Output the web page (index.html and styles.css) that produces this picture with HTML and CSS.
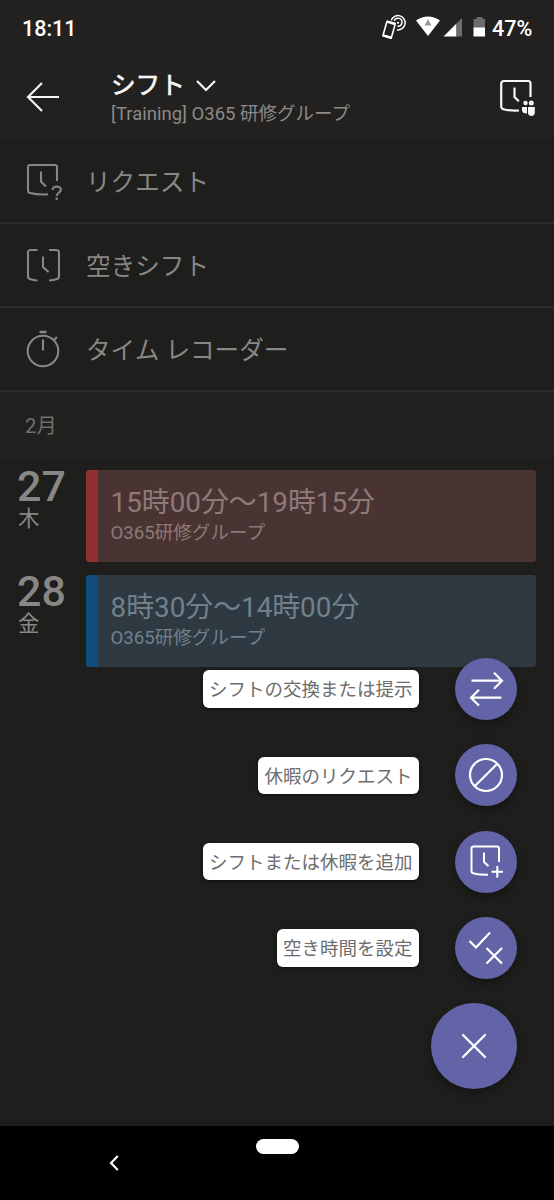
FILE: index.html
```html
<!DOCTYPE html>
<html lang="ja">
<head>
<meta charset="utf-8">
<title>シフト</title>
<link rel="stylesheet" href="styles.css">
</head>
<body>
<div class="screen">
  <header class="top">
    <div class="status">
      <span class="clock">18:11</span>
      <svg class="status-icons" width="118" height="26" viewBox="0 0 118 26">
        <g fill="none" stroke="#fff" stroke-width="1.6">
          <path d="M6 7.2 14.3 9.6 10.2 24.2 1.900 21.800Z" stroke-linejoin="round"/>
          <path d="M2.100 21.400 10.200 23.700M6 7.700 14 10" stroke-width="2.400"/>
          <path d="M10.200 6.200A7.200 7.200 0 1 1 15.900 15.900M13.200 6.800A4 4 0 1 1 16.400 12.200" stroke-width="1.500"/>
          <circle cx="17" cy="8.800" r="1.100" fill="#fff" stroke="none"/>
        </g>
        <path d="M35 6.500Q47 -1.500 59 6.500L47 22Z" fill="#fff"/>
        <path d="M47 5 50.400 11.500H43.600Z" fill="#999"/>
        <path d="M62.500 22.500 75.500 9.500V22.500Z" fill="#fff"/>
        <path d="M75.500 9.500 81 4V22.500H75.500Z" fill="#6d6c6b"/>
        <path d="M95.500 3H101.500V5H104V14H92.500V5H95.500Z" fill="#6d6c6b"/>
        <path d="M92.500 13.500H104V22.500H92.500Z" fill="#fff"/>
      </svg>
      <span class="battery">47%</span>
    </div>
    <div class="appbar">
      <svg class="back" width="34" height="32" viewBox="0 0 34 32"><path d="M33 16H2M16 2 2 16 16 30" fill="none" stroke="#f7f6f5" stroke-width="2.200"/></svg>
      <div class="titles">
        <div class="title">シフト<svg width="20" height="12" viewBox="0 0 20 12"><path d="M1 1 10 10 19 1" fill="none" stroke="#f7f6f5" stroke-width="2.200"/></svg></div>
        <div class="subtitle">[Training] O365 研修グループ</div>
      </div>
      <svg class="team" width="38" height="38" viewBox="0 0 38 38">
        <path d="M31.500 18V4.500Q31.500 2 29 2H5Q2.200 2 2.200 5V27.500Q2.200 29.500 4.500 30.200Q11 32 20 31.500M15.500 8.500V18L19.800 22.300" fill="none" stroke="#f7f6f5" stroke-width="2.200"/>
        <g fill="#f7f6f5"><circle cx="26.500" cy="24" r="2.200"/><circle cx="32.300" cy="24" r="2.500"/><path d="M23 28H28V34.500Q23 34.500 23 31Z"/><path d="M29 28H35.800V33.500A3.400 3.400 0 0 1 29 33.500Z"/></g>
      </svg>
    </div>
  </header>

  <nav class="menu">
    <div class="item">
      <svg width="38" height="38" viewBox="0 0 38 38"><g fill="none" stroke="#888785" stroke-width="2.100"><path d="M31 19V5Q31 3 29 3H4Q2 3 2 5V28.500Q2 30.500 4 31Q12 33 22 32.300M15 9.500V19.500L20 24.500"/><path d="M26.500 28Q27 24.500 31 24.500Q34.800 24.800 34.800 28Q34.500 30 32.500 31Q31 32 30.700 34"/></g><circle cx="30.700" cy="36.700" r="1.300" fill="#888785"/></svg>
      <span>リクエスト</span>
    </div>
    <div class="item">
      <svg width="38" height="38" viewBox="0 0 38 38"><path d="M11.500 4H4.500Q2 4 2 6.500V30Q2 32.500 4.500 33.300Q7.500 34.300 11.500 34.500M23 4H30Q33 4 33 6.500V30Q33 32.500 30.500 33.300Q27.500 34.300 23 34.500M17 10.500V21L22.500 26" fill="none" stroke="#888785" stroke-width="2.100"/></svg>
      <span>空きシフト</span>
    </div>
    <div class="item">
      <svg width="38" height="38" viewBox="0 0 38 38"><g fill="none" stroke="#888785" stroke-width="2.100"><circle cx="17" cy="21" r="15.300"/><path d="M17 9.500V20.500M27.500 10.500 31 7"/><path d="M13.500 2H20.500" stroke-width="2.600"/></g></svg>
      <span>タイム レコーダー</span>
    </div>
  </nav>

  <div class="month">2月</div>

  <main class="days">
    <section class="day">
      <div class="date"><b>27</b><span>木</span></div>
      <div class="shift red"><div class="time">15時00分〜19時15分</div><div class="group">O365研修グループ</div></div>
    </section>
    <section class="day">
      <div class="date"><b>28</b><span>金</span></div>
      <div class="shift blue"><div class="time">8時30分〜14時00分</div><div class="group">O365研修グループ</div></div>
    </section>
  </main>

  <div class="fab-menu">
    <div class="action"><span class="label">シフトの交換または提示</span>
      <div class="fab"><svg width="36" height="36" viewBox="0 0 36 36"><path d="M3.500 9.700H34M26 1.800 34 9.700 26 17.800M33.500 26.700H3M11 18.800 3 26.700 11 34.500" fill="none" stroke="#fff" stroke-width="2.200"/></svg></div></div>
    <div class="action"><span class="label">休暇のリクエスト</span>
      <div class="fab"><svg width="36" height="36" viewBox="0 0 36 36"><path d="M34 18A16 16 0 1 1 2 18A16 16 0 1 1 34 18M6.700 29.300 29.300 6.700" fill="none" stroke="#fff" stroke-width="2.200"/></svg></div></div>
    <div class="action"><span class="label">シフトまたは休暇を追加</span>
      <div class="fab"><svg width="36" height="36" viewBox="0 0 36 36"><path d="M31 18V4.500Q31 2.500 29 2.500H5.500Q3.500 2.500 3.500 4.500V27Q3.500 29 6 29.500Q12 31 20 30.800M16 8.500V18L20.500 22M29.300 22V33.500M23.500 27.700H35" fill="none" stroke="#fff" stroke-width="2"/></svg></div></div>
    <div class="action"><span class="label">空き時間を設定</span>
      <div class="fab"><svg width="36" height="36" viewBox="0 0 36 36"><path d="M1.500 11 8 17.500 22 2.500M18.500 18 34 33.500M34 18 18.500 33.500" fill="none" stroke="#fff" stroke-width="2.200"/></svg></div></div>
    <div class="fab close"><svg width="26" height="26" viewBox="0 0 26 26"><path d="M2 2 24 24M24 2 2 24" fill="none" stroke="#fff" stroke-width="2.300" stroke-linecap="round"/></svg></div>
  </div>

  <footer class="navbar">
    <svg width="10" height="16" viewBox="0 0 10 16"><path d="M8.800 1 2 8 8.800 15" fill="none" stroke="#fff" stroke-width="2.200"/></svg>
    <div class="pill"></div>
  </footer>
</div>
</body>
</html>
```
FILE: styles.css
```css
* { box-sizing: border-box; }
body { margin: 0; background: #1e1e1c; font-family: Roboto, "Noto Sans CJK JP", sans-serif; }
svg { display: block; flex: none; }
.screen { position: relative; width: 554px; height: 1200px; display: flex; flex-direction: column; overflow: hidden; white-space: nowrap; }
.top { height: 140px; flex: none; background: #22211f; color: #f7f6f5; }
.status { height: 56px; display: flex; align-items: center; padding: 0 22px; font-size: 21.500px; font-weight: 500; color: #fff; }
.clock { flex: 1; }
.status-icons { margin: -2px -7px 0 0; }
.battery { width: 40px; }
.appbar { display: flex; height: 83px; padding: 14px 17px 0 26px; }
.back { margin-top: 11px; }
.titles { flex: 1; margin-left: 51px; }
.title { display: flex; align-items: center; gap: 11px; height: 30px; line-height: 30px; margin-top: 1px; font-size: 24.600px; -webkit-text-stroke: 0.7px #f7f6f5; }
.title svg { margin-top: 0; }
.subtitle { height: 27px; line-height: 27px; font-size: 18.500px; color: #8b8a88; }
.team { margin-top: 9px; }
.menu { flex: none; color: #888785; font-size: 24.600px; }
.item { height: 84px; display: flex; align-items: center; padding-left: 26px; gap: 22px; border-bottom: 2px solid #2b2b2a; }
.item span { margin-top: -3px; }
.month { height: 66px; flex: none; padding-left: 25px; line-height: 69px; font-size: 20.300px; color: #6f6e6c; background: #22211f; }
.days { flex: 1; padding: 12px 18px 0 17px; display: flex; flex-direction: column; gap: 12.300px; }
.day { display: flex; height: 92.300px; }
.date { width: 69px; color: #888785; }
.date b { display: block; height: 37px; line-height: 33px; font-size: 43px; font-weight: 500; }
.date span { display: block; padding-left: 1px; line-height: 24px; font-size: 21.500px; }
.shift { flex: 1; border-left: 12.500px solid; border-radius: 3px; padding: 14px 0 0 12.500px; }
.time { height: 37px; line-height: 38px; font-size: 27.850px; }
.group { height: 25px; line-height: 25px; font-size: 18.600px; }
.red { background: #493433; border-color: #8f3131; color: #8e7978; }
.blue { background: #2e3941; border-color: #114d7c; color: #70818b; }
.fab-menu { position: absolute; right: 37px; top: 658px; display: flex; flex-direction: column; align-items: flex-end; gap: 24.300px; }
.action { display: flex; align-items: center; gap: 36.500px; }
.label { height: 37.500px; padding: 0 6px; line-height: 40px; border-radius: 6px; background: #fff; color: #6d6d6d; font-size: 18.500px; box-shadow: 0 1px 4px #0008; }
.fab { width: 62px; height: 62px; border-radius: 50%; background: #6264a7; display: flex; align-items: center; justify-content: center; box-shadow: 0 4px 8px #0005; }
.close { width: 86px; height: 86px; }
.navbar { height: 74px; flex: none; background: #000; display: flex; padding-left: 108.500px; }
.navbar svg { margin-top: 29px; }
.pill { width: 43px; height: 15px; margin: 12.500px 0 0 137px; border-radius: 8px; background: #fff; }
```
